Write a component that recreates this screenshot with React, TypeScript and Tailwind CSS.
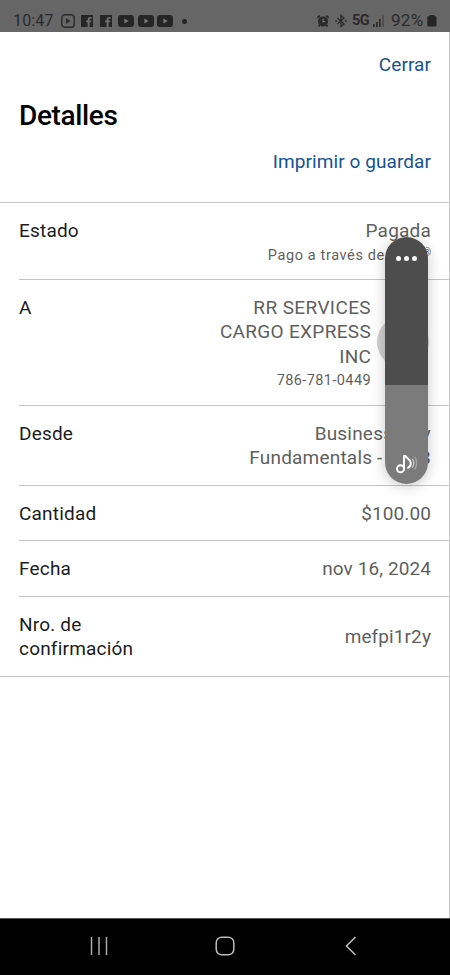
import type { ReactNode } from "react";

interface DetailRowProps {
  label: ReactNode;
  children: ReactNode;
  className: string;
  last?: boolean;
}

const DetailRow = ({ label, children, className, last = false }: DetailRowProps) => (
  <div className={last ? "border-b border-[#c4c4c4]" : ""}>
    <div className={`ml-[19px] flex justify-between pr-[18px] ${last ? "" : "border-b border-[#c4c4c4]"} ${className}`}>
      <div className="text-[#1c1c1c]">{label}</div>
      <div className="flex text-right text-[#5f5f5f]">{children}</div>
    </div>
  </div>
);

const FacebookIcon = () => (
  <svg className="h-3 w-3" viewBox="0 0 12 12">
    <path d="M0 0h12v12H0z" fill="#252525" />
    <path d="M6.6 12V7.2H5V5.4h1.6V4.2q0-2.2 2.4-2.2h1.6v1.7H9.5q-.9 0-.9.8v.9h1.8l-.3 1.8H8.6V12z" fill="#6e6e6e" />
  </svg>
);

const YoutubeIcon = () => (
  <svg className="h-3 w-4" viewBox="0 0 16 12">
    <rect width="16" height="12" rx="3" fill="#252525" />
    <path d="M6.4 3.6v4.8L10.6 6z" fill="#777" />
  </svg>
);

const StatusBar = () => (
  <header className="flex h-8 items-start justify-between bg-[#666] pl-[13px] pr-[13px] pt-[11px] text-[#2b2b2b]">
    <div className="flex h-5 items-center">
      <span className="w-[41px] text-[16px] tracking-[0.15px]">10:47</span>
      <svg className="ml-[7px] h-[14px] w-[14px]" viewBox="0 0 14 14">
        <rect x=".8" y=".8" width="12.4" height="12.4" rx="3" fill="none" stroke="#2b2b2b" strokeWidth="1.4" />
        <path d="M5 4.2v5.6L9.6 7z" fill="#2b2b2b" />
      </svg>
      <div className="ml-[6px] flex gap-[7px]">
        <FacebookIcon />
        <FacebookIcon />
      </div>
      <div className="ml-[6px] flex gap-[3.5px]">
        <YoutubeIcon />
        <YoutubeIcon />
        <YoutubeIcon />
      </div>
      <span className="ml-[9px] h-[5px] w-[5px] rounded-full bg-[#252525]" />
    </div>
    <div className="flex h-5 items-center">
      <svg className="h-3 w-3" viewBox="0 0 12 12">
        <path d="M.4 2.8 2.8.6M9.2.6l2.4 2.2M2.6 10 1.4 11.4M9.4 10l1.2 1.4" stroke="#2b2b2b" strokeWidth="1.8" />
        <circle cx="6" cy="6.4" r="5" fill="#2b2b2b" />
        <path d="M6 3.8v2.8h2.2" fill="none" stroke="#777" strokeWidth="1.1" />
      </svg>
      <svg className="ml-[6px] h-[14px] w-3" viewBox="0 0 12 14" fill="none" stroke="#2b2b2b" strokeWidth="1.3">
        <path d="m2.5 4 6.5 6-3 2.6V1.4L9 4l-6.5 6" />
        <path d="M.3 7h1.8M9.9 7h1.8" />
      </svg>
      <span className="ml-[5px] w-[19px] text-[14.5px] font-bold tracking-[-0.6px]">5G</span>
      <svg className="ml-[2px] h-3 w-3" viewBox="0 0 12 12" fill="#2b2b2b">
        <path d="M0 9h1.7v3H0zM3 7h1.7v5H3zM6 4h1.7v8H6z" />
        <path d="M9.3.5H11V12H9.3z" opacity=".45" />
      </svg>
      <span className="ml-[6px] w-[36px] text-[17px] tracking-[0.3px]">92%</span>
      <svg className="h-3 w-[10px]" viewBox="0 0 10 12" fill="#252525">
        <rect x="2.5" width="5" height="3" rx=".5" />
        <rect x=".3" y="1" width="9.2" height="10.6" rx="1.6" />
      </svg>
    </div>
  </header>
);

const VolumePanel = () => (
  <div className="absolute left-[385px] top-[237px] flex h-[247px] w-[43px] flex-col items-center justify-between overflow-hidden rounded-full bg-linear-to-b from-[#4d4d4d] from-60% to-[#7b7b7b] to-60% shadow-[0_2px_14px_rgba(0,0,0,0.22)]">
    <div className="mt-[19px] flex gap-[3px]">
      <span className="h-[5px] w-[5px] rounded-full bg-white" />
      <span className="h-[5px] w-[5px] rounded-full bg-white" />
      <span className="h-[5px] w-[5px] rounded-full bg-white" />
    </div>
    <svg className="mb-[10px] h-5 w-[22px]" viewBox="0 0 22 20" fill="none" strokeLinecap="round" strokeLinejoin="round">
      <circle cx="4.5" cy="14.8" r="3.5" stroke="white" strokeWidth="1.9" />
      <path d="M8 14.8V2h1.6c.4 2.4 5.2 3 5.2 7 0 2.4-1 4-2.8 4.9" stroke="white" strokeWidth="1.9" />
      <path d="M16.6 5.4c1.6 2.4 1.6 5.4 0 7.8" stroke="#c6c6c6" strokeWidth="1.4" />
      <path d="M18.8 3.2c2.4 3.5 2.4 8.6 0 12" stroke="#a2a2a2" strokeWidth="1.3" />
    </svg>
  </div>
);

const NavigationBar = () => (
  <nav className="flex h-[57px] items-center justify-between border-t border-[#555] bg-black pb-[2px] pl-[90px] pr-[93px]">
    <svg className="h-[18px] w-[18px]" viewBox="0 0 18 18" stroke="#aaa" strokeWidth="1.5">
      <path d="M1.5 0v18M9 0v18M16.5 0v18" />
    </svg>
    <svg className="-ml-[4px] h-5 w-5" viewBox="0 0 20 20" fill="none" stroke="#bbb" strokeWidth="1.5">
      <rect x="1.2" y="1.2" width="17.6" height="17.6" rx="5.5" />
    </svg>
    <svg className="h-5 w-3" viewBox="0 0 12 20" fill="none" stroke="#bbb" strokeWidth="1.6">
      <path d="m10.5 1-9 9 9 9" />
    </svg>
  </nav>
);

const App = () => {
  return (
    <div className="relative flex h-[975px] w-[450px] flex-col overflow-hidden bg-white font-[Roboto,sans-serif]">
      <StatusBar />
      <main className="flex-1 border-r border-[#c8c8c8] text-[19px] leading-[24.4px] tracking-[0.2px]">
        <div className="flex h-[171px] flex-col border-b border-[#c4c4c4] pl-[19px] pr-[18px] pt-[21px] tracking-[0.08px]">
          <button className="self-end text-[#155391]">Cerrar</button>
          <h1 className="mt-[23px] text-[28px] font-medium leading-8 tracking-[-0.35px] text-black">Detalles</h1>
          <button className="mt-[18px] self-end text-[#155391]">Imprimir o guardar</button>
        </div>
        <DetailRow label="Estado" className="h-[77px] pt-4">
          <div>
            <p>Pagada</p>
            <p className="pt-px text-[14.5px] tracking-[0.62px]">
              Pago a través de Zelle<span className="relative -top-1 text-[10px] tracking-normal">®</span>
            </p>
          </div>
        </DetailRow>
        <DetailRow label="A" className="h-[126px] pt-4">
          <div>
            <p className="tracking-[0.38px]">RR SERVICES</p>
            <p className="tracking-[0.32px]">CARGO EXPRESS</p>
            <p>INC</p>
            <p className="text-[14.5px] tracking-[0.4px]">786-781-0449</p>
          </div>
          <div className="ml-[6px] mr-[2px] mt-[20px] h-[52px] w-[52px] rounded-full bg-[#d0d0d0]" />
        </DetailRow>
        <DetailRow label="Desde" className="h-20 pt-4">
          <div>
            <p>Business Adv</p>
            <p>Fundamentals - 0008</p>
          </div>
        </DetailRow>
        <DetailRow label="Cantidad" className="h-[55px] pt-4">
          <span className="tracking-[0.1px]">$100.00</span>
        </DetailRow>
        <DetailRow label="Fecha" className="h-14 pt-4">
          <span className="tracking-[0.1px]">nov 16, 2024</span>
        </DetailRow>
        <DetailRow label={<>Nro. de<br />confirmación</>} className="h-[79px] items-center pt-px" last>
          <span className="tracking-[0.1px]">mefpi1r2y</span>
        </DetailRow>
      </main>
      <NavigationBar />
      <VolumePanel />
    </div>
  );
};

export default App;
